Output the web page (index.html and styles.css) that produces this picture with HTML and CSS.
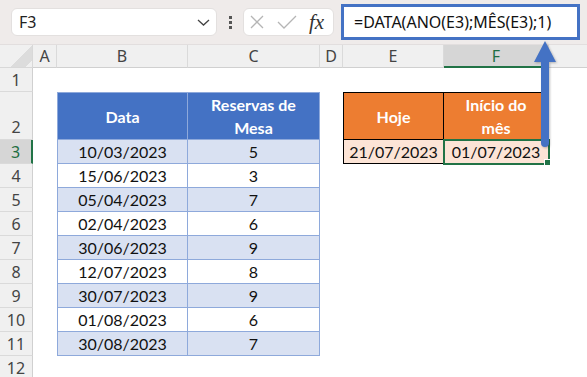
FILE: index.html
```html
<!DOCTYPE html>
<html lang="pt">
<head>
  <meta charset="UTF-8">
  <title>DATA ANO MÊS</title>
  <link rel="stylesheet" href="styles.css">
</head>
<body>
  <div class="toolbar">
    <div class="namebox">
      <span>F3</span>
      <svg class="chev" width="13" height="7" viewBox="0 0 13 7"><path d="M1 1 L6.5 6 L12 1" fill="none" stroke="#444" stroke-width="1.3"/></svg>
    </div>
    <div class="dots"><i></i><i></i><i></i></div>
    <div class="fnbox">
      <svg width="14" height="14" viewBox="0 0 14 14"><path d="M1 1 L13 13 M13 1 L1 13" stroke="#b5b5b5" stroke-width="1.3"/></svg>
      <svg width="20" height="14" viewBox="0 0 20 14"><path d="M1 7 L7 13 L19 1" fill="none" stroke="#b5b5b5" stroke-width="1.3"/></svg>
      <span class="fx">fx</span>
    </div>
    <div class="formula">=DATA(ANO(E3);MÊS(E3);1)</div>
  </div>

  <div class="sheet">
    <div class="corner"></div>
    <div class="colhdr">A</div>
    <div class="colhdr">B</div>
    <div class="colhdr">C</div>
    <div class="colhdr">D</div>
    <div class="colhdr">E</div>
    <div class="colhdr active">F</div>
    <div class="colhdr last"></div>

    <div class="rowhdr">1</div>
    <div></div><div></div><div></div><div></div><div></div><div></div><div></div>

    <div class="rowhdr bottom">2</div>
    <div></div>
    <div class="bt head first">Data</div>
    <div class="bt head">Reservas de<br>Mesa</div>
    <div></div>
    <div class="ot head first">Hoje</div>
    <div class="ot head">Início do<br>mês</div>
    <div></div>

    <div class="rowhdr active">3</div>
    <div></div>
    <div class="bt band first">10/03/2023</div>
    <div class="bt band">5</div>
    <div></div>
    <div class="ot first">21/07/2023</div>
    <div class="ot sel">01/07/2023</div>
    <div></div>

    <div class="rowhdr">4</div>
    <div></div>
    <div class="bt first">15/06/2023</div>
    <div class="bt">3</div>
    <div></div><div></div><div></div><div></div>

    <div class="rowhdr">5</div>
    <div></div>
    <div class="bt band first">05/04/2023</div>
    <div class="bt band">7</div>
    <div></div><div></div><div></div><div></div>

    <div class="rowhdr">6</div>
    <div></div>
    <div class="bt first">02/04/2023</div>
    <div class="bt">6</div>
    <div></div><div></div><div></div><div></div>

    <div class="rowhdr">7</div>
    <div></div>
    <div class="bt band first">30/06/2023</div>
    <div class="bt band">9</div>
    <div></div><div></div><div></div><div></div>

    <div class="rowhdr">8</div>
    <div></div>
    <div class="bt first">12/07/2023</div>
    <div class="bt">8</div>
    <div></div><div></div><div></div><div></div>

    <div class="rowhdr">9</div>
    <div></div>
    <div class="bt band first">30/07/2023</div>
    <div class="bt band">9</div>
    <div></div><div></div><div></div><div></div>

    <div class="rowhdr">10</div>
    <div></div>
    <div class="bt first">01/08/2023</div>
    <div class="bt">6</div>
    <div></div><div></div><div></div><div></div>

    <div class="rowhdr">11</div>
    <div></div>
    <div class="bt band first">30/08/2023</div>
    <div class="bt band">7</div>
    <div></div><div></div><div></div><div></div>

    <div class="rowhdr">12</div>
    <div></div><div></div><div></div><div></div><div></div><div></div><div></div>
  </div>

  <!-- callout arrow from F3 up to the formula bar -->
  <svg class="arrow" width="30" height="110" viewBox="0 0 30 110">
    <path d="M15 1 L26 22 L19 22 L19 103 Q19 107 15 107 Q11 107 11 103 L11 22 L4 22 Z" fill="#4472c4"/>
  </svg>
</body>
</html>
```

FILE: styles.css
```css
body {
  margin: 0;
  width: 587px;
  height: 377px;
  overflow: hidden;
  background: #fff;
  position: relative;
  font-family: "Noto Sans", sans-serif;
}

.toolbar {
  display: flex;
  align-items: center;
  height: 44px;
  padding-left: 11px;
  background-color: #efebea;
  border-bottom: 1px solid #e2dede;
}

.namebox {
  display: flex;
  align-items: center;
  justify-content: space-between;
  box-sizing: border-box;
  width: 206px;
  height: 28px;
  padding: 0 6px 0 7px;
  background: #fff;
  border: 1px solid #e3e0df;
  border-radius: 6px;
  font-size: 16px;
  color: #222;
}

.dots {
  display: flex;
  flex-direction: column;
  align-items: center;
  gap: 2px;
  width: 26px;
}

.dots i {
  width: 3px;
  height: 3px;
  background: #555;
}

.fnbox {
  display: flex;
  align-items: center;
  box-sizing: border-box;
  width: 91px;
  height: 28px;
  padding-left: 6px;
  gap: 15px;
  background: #fff;
  border: 1px solid #e3e0df;
  border-radius: 6px;
}

.fnbox svg + svg {
  margin-left: -2px;
}

.fx {
  margin-left: -3px;
  font-family: "Liberation Serif", serif;
  font-style: italic;
  font-size: 21px;
  color: #333;
  line-height: 1;
}

.formula {
  display: flex;
  align-items: center;
  box-sizing: border-box;
  width: 239px;
  height: 36px;
  margin-left: 7px;
  padding-left: 10px;
  background: #fff;
  border: 3px solid #4472c4;
  font-size: 16px;
  color: #111;
}

.sheet {
  display: grid;
  grid-template-columns: 33px 24px 131px 132px 23px 101px 105px 1fr;
  grid-template-rows: 23px 24px 48px repeat(10, 24px);
  font-family: Lato, sans-serif;
  font-size: 16px;
  color: #111;
}

.sheet > div {
  box-sizing: border-box;
  display: flex;
  align-items: center;
  justify-content: center;
  text-align: center;
}

.corner {
  background: #f0f0f0 linear-gradient(135deg, transparent 60%, #dcdcdc 60%, #dcdcdc 88%, transparent 88%);
  border-right: 1px solid #d8d8d8;
  border-bottom: 1px solid #d8d8d8;
}

.colhdr {
  background: #f0f0f0;
  border-right: 1px solid #dadada;
  border-bottom: 1px solid #d0d0d0;
  font-family: "Noto Sans", sans-serif;
  font-size: 16px;
  color: #444;
}

.colhdr.last {
  border-right: 0;
}

.colhdr.active {
  background: #d6d6d6;
  color: #1e6e42;
  border-bottom: 2px solid #217346;
}

.rowhdr {
  background: #f0f0f0;
  border-right: 1px solid #d0d0d0;
  border-bottom: 1px solid #dadada;
  font-family: "Noto Sans", sans-serif;
  font-size: 16px;
  color: #444;
}

.sheet > .rowhdr.bottom {
  align-items: flex-end;
  padding-bottom: 1px;
}

.rowhdr.active {
  background: #d6d6d6;
  color: #1e6e42;
  border-right: 2px solid #217346;
}

.bt {
  border-right: 1px solid #8ea9db;
  border-bottom: 1px solid #8ea9db;
  background: #fff;
}

.bt.first {
  border-left: 1px solid #8ea9db;
}

.bt.band {
  background: #d9e1f2;
}

.bt.head {
  background: #4472c4;
  border-top: 1px solid #8ea9db;
  color: #fff;
  font-weight: bold;
  line-height: 23px;
}

.ot {
  background: #fce4d6;
  border-right: 1px solid #000;
  border-bottom: 1px solid #000;
}

.ot.first {
  border-left: 1px solid #000;
}

.ot.head {
  background: #ed7d31;
  border-top: 1px solid #000;
  color: #fff;
  font-weight: bold;
  line-height: 23px;
}

.sel {
  position: relative;
  outline: 2px solid #217346;
  outline-offset: -1px;
}

.sel::after {
  content: "";
  position: absolute;
  right: -3px;
  bottom: -3px;
  width: 5px;
  height: 5px;
  background: #217346;
  border: 1px solid #fff;
}

.arrow {
  position: absolute;
  left: 530px;
  top: 40px;
  filter: drop-shadow(1px 1px 1px rgba(0, 0, 0, 0.25));
}
```
